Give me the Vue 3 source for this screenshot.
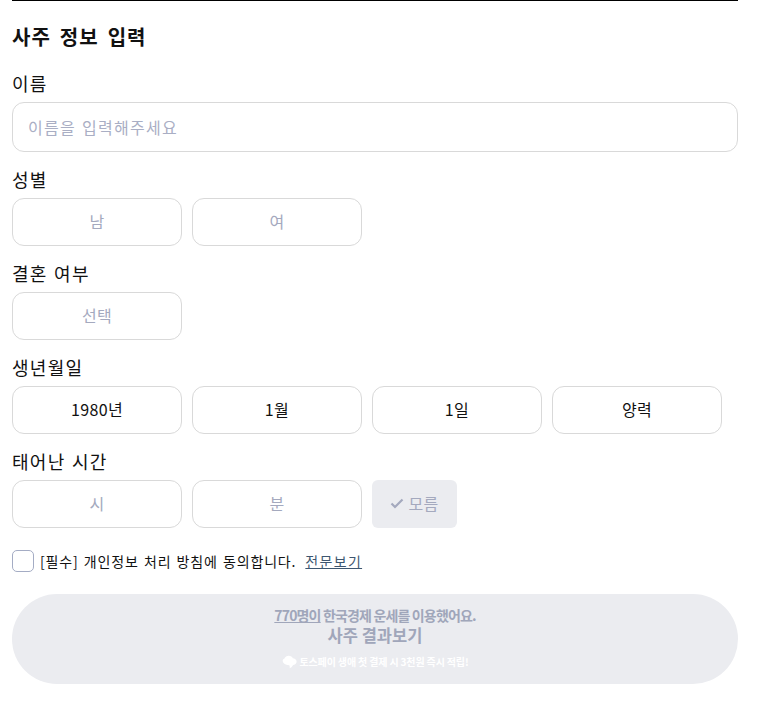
<script setup>
const birth = ['1980년', '1월', '1일', '양력']
</script>

<template>
  <div class="page">
    <div class="inner">
      <h2 class="title">사주 정보 입력</h2>

      <div class="field">
        <label class="label">이름</label>
        <input class="name-input" type="text" placeholder="이름을 입력해주세요" />
      </div>

      <div class="field">
        <label class="label">성별</label>
        <div class="row">
          <button class="select empty">남</button>
          <button class="select empty">여</button>
        </div>
      </div>

      <div class="field">
        <label class="label">결혼 여부</label>
        <div class="row">
          <button class="select empty">선택</button>
        </div>
      </div>

      <div class="field">
        <label class="label">생년월일</label>
        <div class="row">
          <button v-for="b in birth" :key="b" class="select">{{ b }}</button>
        </div>
      </div>

      <div class="field">
        <label class="label">태어난 시간</label>
        <div class="row">
          <button class="select empty">시</button>
          <button class="select empty">분</button>
          <button class="unknown">
            <svg width="14" height="11" viewBox="0 0 14 11" fill="none">
              <path d="M1.5 5.5 L5 9 L12.5 1.5" stroke="#a4a9be" stroke-width="2.2" />
            </svg>
            모름
          </button>
        </div>
      </div>

      <div class="agree">
        <span class="checkbox"></span>
        <span class="agree-text">[필수] 개인정보 처리 방침에 동의합니다.</span>
        <a class="agree-link">전문보기</a>
      </div>

      <button class="submit">
        <span class="submit-top"><u>770명이</u> 한국경제 운세를 이용했어요.</span>
        <span class="submit-main">사주 결과보기</span>
        <span class="submit-promo">
          <svg width="15" height="14" viewBox="0 0 16 14">
            <path d="M6 0.5 C9 0.2 11 1.2 11.5 3 C13.5 3 15.6 4.5 15.6 6.8 C15.6 9 13.5 10 11.8 10.2 C10.8 12 9.5 13.4 8.2 13.6 C8.4 12.6 8.3 11.4 7.8 10.4 C5 10.4 2.6 9.6 1.4 7.8 C0.2 5.8 0.6 4 2.4 3.6 C3 2 4.4 0.8 6 0.5 Z" fill="#fff" />
          </svg>
          토스페이 생애 첫 결제 시 3천원 즉시 적립!
        </span>
      </button>
    </div>
  </div>
</template>

<style>
html, body { background: #fff; }
</style>

<style scoped>
.page { width: 758px; height: 701px; overflow: hidden; font-family: "Noto Sans CJK KR", "Noto Sans", sans-serif; color: #111; }
.inner { width: 726px; margin-left: 12px; border-top: 1px solid #000; }
.title { margin: 22px 0 0; height: 27px; font-size: 20px; line-height: 28px; font-weight: 700; letter-spacing: 1px; word-spacing: 3.5px; color: #111; }
.field { margin-top: 20px; }
.field + .field { margin-top: 14px; }
.label { display: block; height: 26px; margin-bottom: 6px; font-size: 18px; line-height: 26px; font-weight: 400; letter-spacing: 1.3px; word-spacing: 1px; }
.name-input { display: block; box-sizing: border-box; width: 100%; height: 50px; padding: 0 15px; border: 1px solid #d9d9d9; border-radius: 12px; background: #fff; font: inherit; font-size: 16px; letter-spacing: 1.3px; word-spacing: 1px; outline: none; }
.name-input::placeholder { color: #a9aec4; opacity: 1; }
.row { display: flex; gap: 10px; }
.select { box-sizing: border-box; width: 170px; height: 48px; padding: 0 0 2px; border: 1px solid #d9d9d9; border-radius: 12px; background: #fff; font: inherit; font-size: 16px; letter-spacing: 0.4px; color: #111; }
.select.empty { color: #a4a9be; }
.unknown { display: flex; align-items: center; justify-content: center; gap: 4px; box-sizing: border-box; width: 85px; height: 48px; padding: 0 0 2px; border: 0; border-radius: 6px; background: #ebecf0; font: inherit; font-size: 16px; letter-spacing: 0.4px; color: #a4a9be; }
.agree { display: flex; align-items: center; height: 22px; margin-top: 22px; font-size: 14px; }
.checkbox { box-sizing: border-box; width: 22px; height: 22px; border: 1px solid #a4acc4; border-radius: 5px; margin-right: 6px; }
.agree-text { letter-spacing: 0.85px; word-spacing: 1.2px; }
.agree-link { margin-left: 9px; color: #3d5670; text-decoration: underline; letter-spacing: 1.3px; }
.submit { display: flex; flex-direction: column; align-items: center; box-sizing: border-box; width: 100%; height: 90px; margin-top: 22px; padding: 11px 0 0; border: 0; border-radius: 45px; background: #ebecf0; font: inherit; color: #a0a6ba; }
.submit-top { font-size: 14px; line-height: 20px; font-weight: 700; letter-spacing: -0.85px; }
.submit-main { font-size: 16.5px; line-height: 21px; font-weight: 700; }
.submit-promo { display: flex; align-items: center; gap: 3px; margin-top: 9px; font-size: 10px; line-height: 14px; font-weight: 700; letter-spacing: -0.15px; color: #fff; }
</style>
